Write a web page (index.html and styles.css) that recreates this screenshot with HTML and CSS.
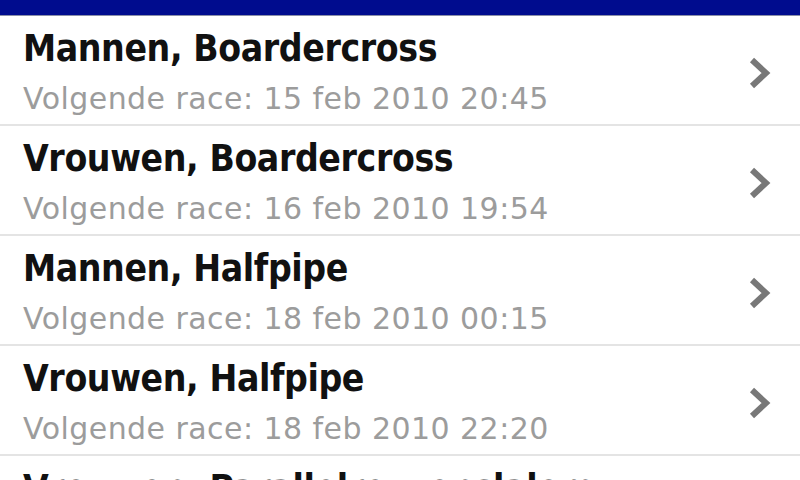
FILE: index.html
```html
<!DOCTYPE html>
<html lang="nl">
<head>
    <meta charset="UTF-8">
    <meta name="viewport" content="width=device-width, initial-scale=1.0">
    <title>Snowboarden</title>
    <link rel="stylesheet" href="styles.css">
</head>
<body>
    <div class="topbar"></div>
    <!-- lijst met onderdelen -->
    <ul class="list">
        <li class="row">
            <div class="info">
                <div class="title">Mannen, Boardercross</div>
                <div class="sub">Volgende race: 15 feb 2010 20:45</div>
            </div>
            <svg class="chev" width="24" height="34" viewBox="0 0 24 34"><path d="M4 4 L18 17 L4 30" fill="none" stroke="#787878" stroke-width="6"/></svg>
        </li>
        <li class="row">
            <div class="info">
                <div class="title">Vrouwen, Boardercross</div>
                <div class="sub">Volgende race: 16 feb 2010 19:54</div>
            </div>
            <svg class="chev" width="24" height="34" viewBox="0 0 24 34"><path d="M4 4 L18 17 L4 30" fill="none" stroke="#787878" stroke-width="6"/></svg>
        </li>
        <li class="row">
            <div class="info">
                <div class="title">Mannen, Halfpipe</div>
                <div class="sub">Volgende race: 18 feb 2010 00:15</div>
            </div>
            <svg class="chev" width="24" height="34" viewBox="0 0 24 34"><path d="M4 4 L18 17 L4 30" fill="none" stroke="#787878" stroke-width="6"/></svg>
        </li>
        <li class="row">
            <div class="info">
                <div class="title">Vrouwen, Halfpipe</div>
                <div class="sub">Volgende race: 18 feb 2010 22:20</div>
            </div>
            <svg class="chev" width="24" height="34" viewBox="0 0 24 34"><path d="M4 4 L18 17 L4 30" fill="none" stroke="#787878" stroke-width="6"/></svg>
        </li>
        <li class="row">
            <div class="info">
                <div class="title">Vrouwen, Parallelreuzenslalom</div>
                <div class="sub">Volgende race: 26 feb 2010 18:00</div>
            </div>
            <svg class="chev" width="24" height="34" viewBox="0 0 24 34"><path d="M4 4 L18 17 L4 30" fill="none" stroke="#787878" stroke-width="6"/></svg>
        </li>
    </ul>
</body>
</html>
```
FILE: styles.css
```css
*{
    margin: 0;
    padding: 0;
}
body{
    background: #fff;
    font-family: "DejaVu Sans", Verdana, sans-serif;
    overflow: hidden;
}
.topbar{
    height: 15px;
    background-color: #000c8e;
    border-bottom: 1px solid #8a8fa8;
}
.list{
    list-style: none;
}
.row{
    height: 110px;
    box-sizing: border-box;
    padding: 11px 0 0 23px;
    display: flex;
    align-items: center;
    border-bottom: 2px solid #e4e4e4;
}
.info{
    flex: 1;
    align-self: flex-start;
}
.title{
    font-family: "DejaVu Sans Condensed", "DejaVu Sans", sans-serif;
    font-size: 37px;
    line-height: 44px;
    font-weight: bold;
    letter-spacing: -0.4px;
    color: #111;
}
.sub{
    font-size: 30px;
    line-height: 40px;
    margin-top: 8px;
    letter-spacing: 0.45px;
    color: #9c9c9c;
}
.chev{
    margin-right: 28px;
    margin-top: -6px;
}
```
